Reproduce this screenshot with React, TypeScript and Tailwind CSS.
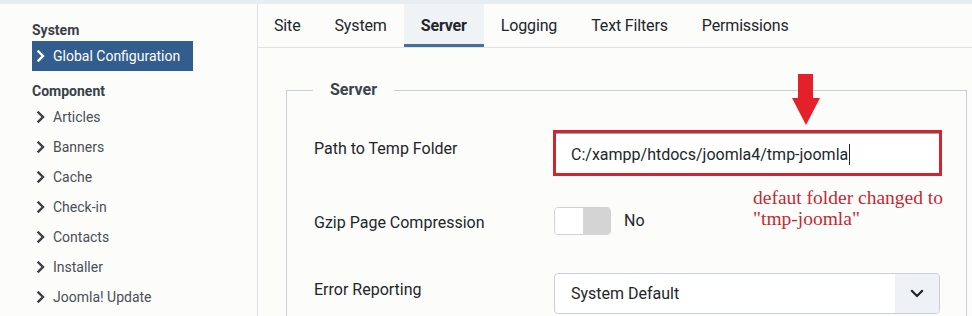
import React from "react";

const Chevron = ({ color }: { color: string }) => (
  <svg width="8" height="12" viewBox="0 0 8 12" className="shrink-0">
    <polyline points="1.5,1.5 6,6 1.5,10.5" fill="none" stroke={color} strokeWidth="2.4" strokeLinecap="square" />
  </svg>
);

const items = ["Articles", "Banners", "Cache", "Check-in", "Contacts", "Installer", "Joomla! Update"];
const tabs = ["Site", "System", "Server", "Logging", "Text Filters", "Permissions"];

export default function App() {
  return (
    <div className="relative w-[972px] h-[316px] overflow-hidden bg-[#e8edf2] font-['Roboto',sans-serif]">
      <div className="flex mt-[4px] h-[312px]">
        {/* Sidebar */}
        <div className="w-[258px] shrink-0 bg-[#fcfcfb] border-r border-[#dde2e7] pl-[32px] pt-[16px]">
          <div className="h-[20px] leading-[20px] text-[14px] font-bold text-[#3b4046]">System</div>
          <div className="mt-[1px] h-[30px] w-[161px] bg-[#325d8e] flex items-center pl-[5px] gap-[8px] text-white text-[14px]">
            <Chevron color="#ffffff" />
            <span>Global Configuration</span>
          </div>
          <div className="mt-[10px] h-[20px] leading-[20px] text-[14px] font-bold text-[#3b4046]">Component</div>
          <div className="mt-[1px]">
            {items.map((it) => (
              <div key={it} className="h-[30px] flex items-center pl-[5px] gap-[8px] text-[14px] text-[#4a4f55]">
                <Chevron color="#3a3f44" />
                <span>{it}</span>
              </div>
            ))}
          </div>
        </div>

        {/* Main */}
        <div className="flex-1 bg-[#fcfcfb]">
          <div className="h-[44px] border-b border-[#dfe3e8] flex ml-[-1px] tracking-[-0.15px]">
            {tabs.map((t) =>
              t === "Server" ? (
                <div key={t} className="h-full px-[17px] flex items-center bg-[#eff3f6] border-b-[3px] border-[#44709e] pt-[3px] text-[16px] font-bold text-[#22262a]">
                  {t}
                </div>
              ) : (
                <div key={t} className="h-full px-[17px] flex items-center text-[16px] text-[#22262a]">
                  {t}
                </div>
              )
            )}
          </div>

          <fieldset className="ml-[28px] mr-[5px] mt-[30px] border border-[#c6ced8] pl-[27px] h-[260px]">
            <legend className="ml-[-1px] px-[17px] text-[16px] leading-[24px] font-bold text-[#3d434b]">Server</legend>

            <div className="flex items-start mt-[28px]">
              <div className="w-[240px] mt-[9px] leading-[20px] text-[16px] text-[#22262a]">Path to Temp Folder</div>
              <div className="ml-[-1px] w-[389px] h-[46px] border-[3px] border-[#d2232e] bg-white">
                <div className="h-full border-t border-[#8ea7c6] flex items-center pl-[15px] pt-[2px] text-[16px] text-[#22262a]">
                  <span>C:/xampp/htdocs/joomla4/tmp-joomla</span>
                  <span className="ml-[1px] w-[1px] h-[21px] bg-[#22262a]" />
                </div>
              </div>
            </div>

            <div className="flex items-start mt-[31px]">
              <div className="w-[240px] mt-[6px] leading-[20px] text-[16px] text-[#22262a]">Gzip Page Compression</div>
              <div className="flex items-center">
                <div className="w-[57px] h-[28px] rounded-[4px] border border-[#cdd3d9] overflow-hidden flex">
                  <div className="w-[28px] h-full bg-white" />
                  <div className="flex-1 h-full bg-[#d4d4d4]" />
                </div>
                <span className="ml-[13px] text-[16px] text-[#22262a]">No</span>
              </div>
            </div>

            <div className="flex items-start mt-[38px]">
              <div className="w-[240px] mt-[7px] leading-[20px] text-[16px] text-[#22262a]">Error Reporting</div>
              <div className="w-[386px] h-[41px] rounded-[4px] border border-[#c7cfd9] bg-white flex overflow-hidden">
                <div className="flex-1 flex items-center pl-[16px] text-[16px] text-[#22262a]">System Default</div>
                <div className="w-[44px] h-full bg-[#eef2f7] flex items-center justify-center">
                  <svg width="14" height="9" viewBox="0 0 14 9">
                    <polyline points="2,2 7,7 12,2" fill="none" stroke="#1f2328" strokeWidth="2.2" strokeLinecap="square" />
                  </svg>
                </div>
              </div>
            </div>
          </fieldset>
        </div>
      </div>

      {/* Annotations */}
      <svg className="absolute left-[791px] top-[74px]" width="30" height="52" viewBox="0 0 30 52">
        <polygon points="7,0 22,0 22,24 29,24 15,51 1,24 7,24" fill="#e4202a" />
      </svg>
      <div className="absolute left-[753px] top-[187px] font-['Liberation_Serif',serif] text-[19.5px] leading-[21px] text-[#c42a31]">
        <div>defaut folder changed to</div>
        <div>"tmp-joomla"</div>
      </div>
    </div>
  );
}
